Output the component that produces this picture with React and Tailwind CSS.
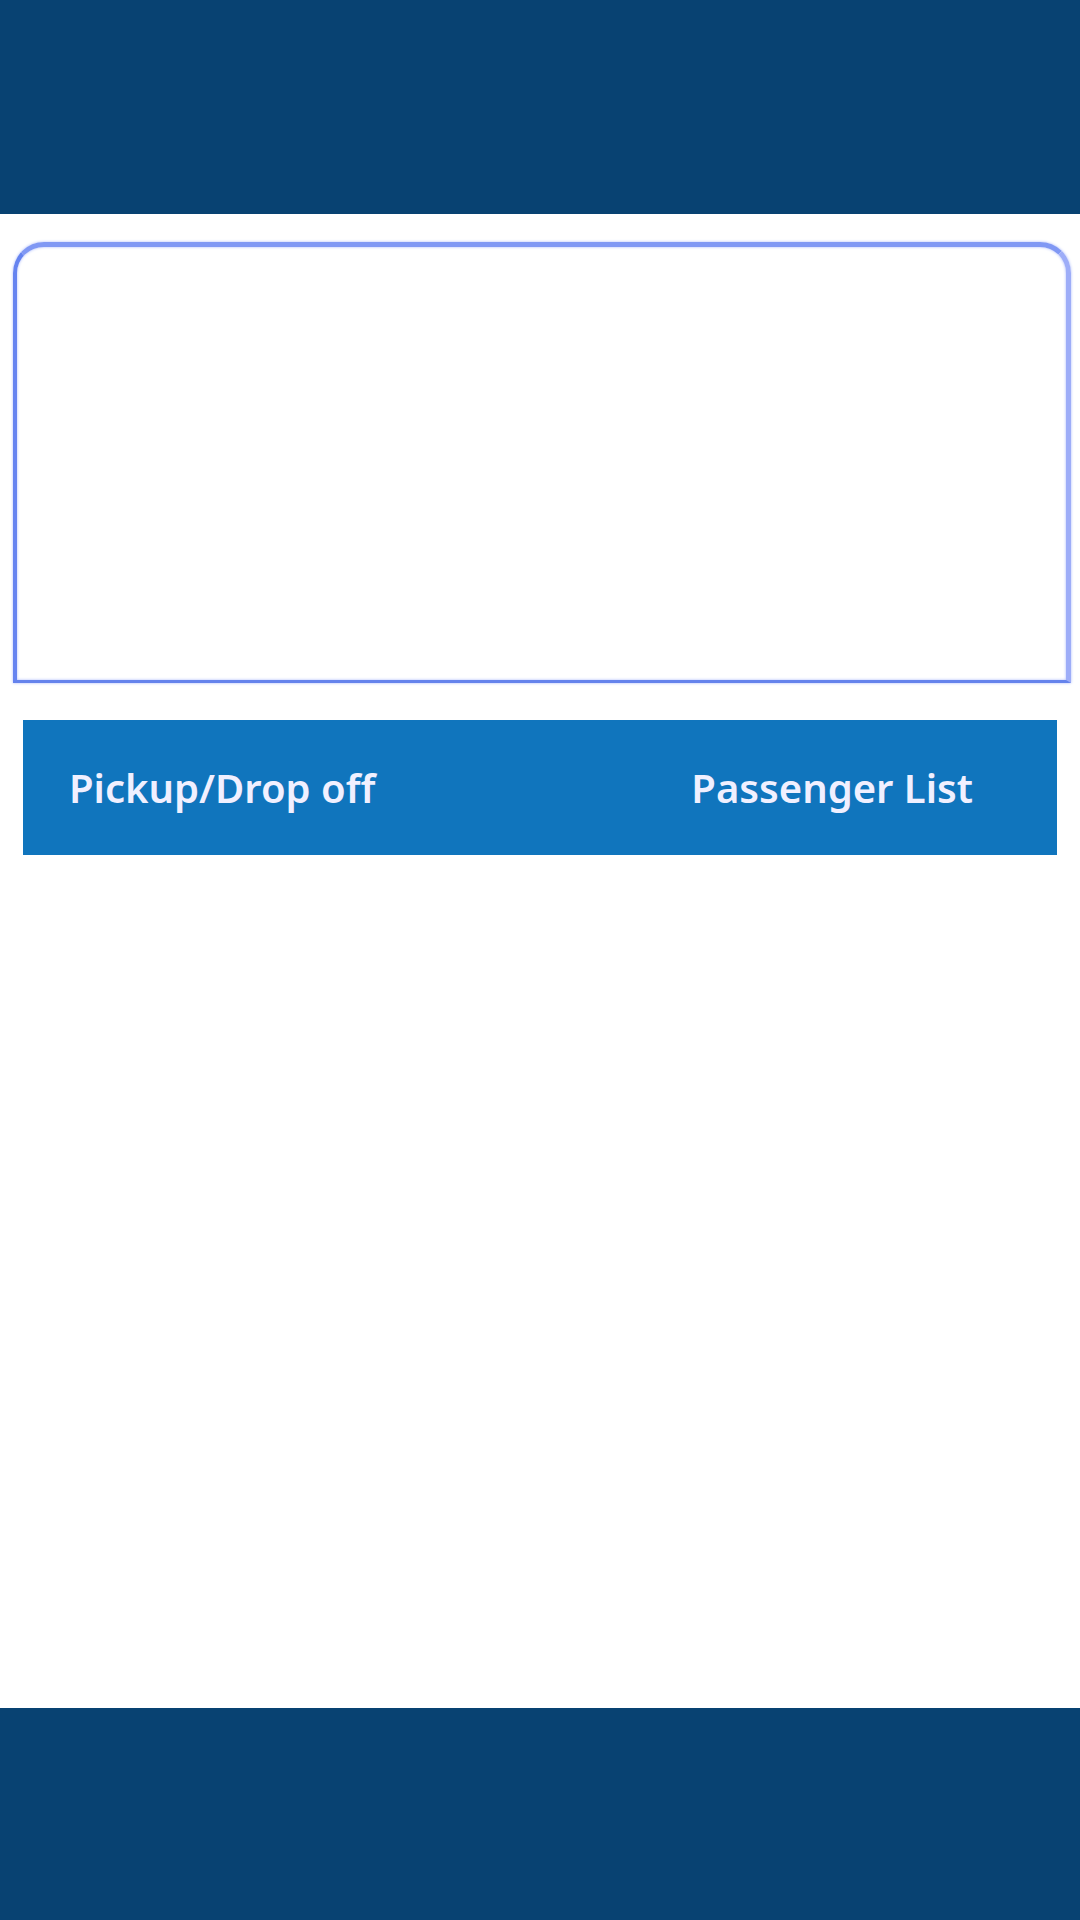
export default function App() {
  return (
    <div className="flex min-h-screen flex-col bg-white font-['Noto_Sans','Open_Sans',sans-serif]">
      <header className="h-[214px] bg-[#084272]" />
      <main className="flex-1 pt-7">
        <section
          aria-label="Trip details"
          className="mr-[9px] ml-[13px] h-[441px] rounded-t-[31px] border-t-5 border-r-5 border-b-3 border-l-4 border-t-[#8098f4] border-r-[#9dadf8] border-b-[#6583ec] border-l-[#6583f0] shadow-[0_0_3px_#a9b8fb,inset_0_0_3px_#a9b8fb]"
        />
        <nav className="mx-[23px] mt-[37px] flex h-[135px] items-center justify-between bg-[#1075bd] pr-[84px] pl-[46px] text-[40px] font-semibold text-[#f0f0ff]">
          <button type="button">Pickup/Drop off</button>
          <button type="button">Passenger List</button>
        </nav>
      </main>
      <footer className="h-[212px] bg-[#084272]" />
    </div>
  );
}
